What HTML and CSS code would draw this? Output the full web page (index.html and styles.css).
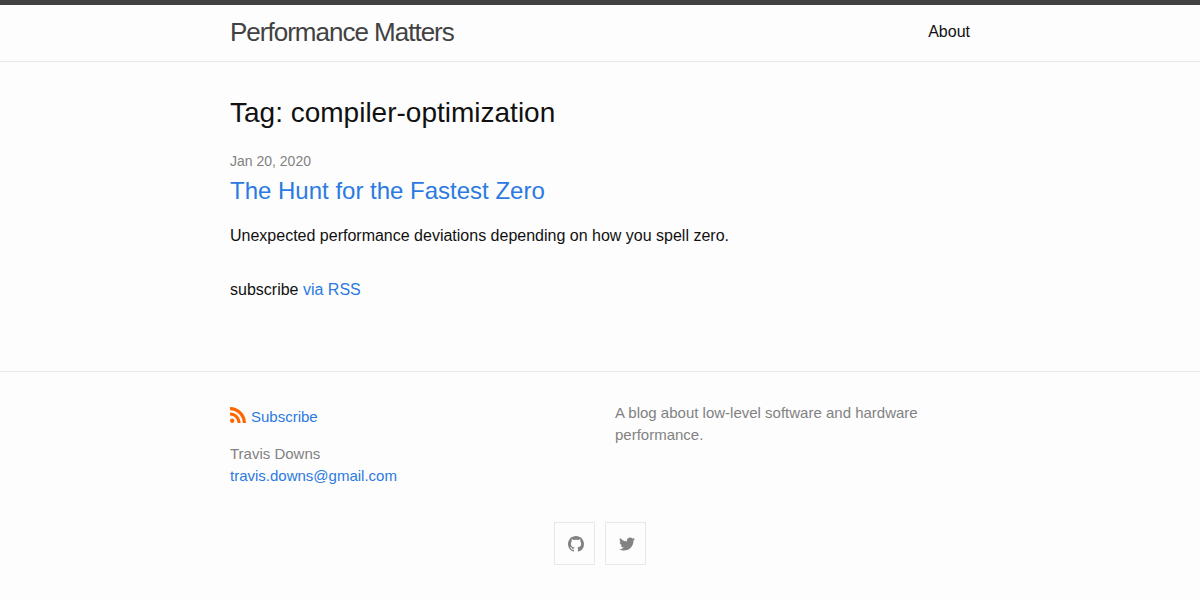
FILE: index.html
```html
<!DOCTYPE html>
<html lang="en">
<head>
<meta charset="utf-8">
<title>Tag: compiler-optimization | Performance Matters</title>
<link rel="stylesheet" href="styles.css">
</head>
<body>
<header class="site-header">
  <div class="wrapper header-row">
    <a class="site-title" href="#">Performance Matters</a>
    <nav class="site-nav"><a class="page-link" href="#">About</a></nav>
  </div>
</header>
<main class="page-content">
  <div class="wrapper">
    <h1 class="page-heading">Tag: compiler-optimization</h1>
    <ul class="post-list">
      <li>
        <span class="post-meta">Jan 20, 2020</span>
        <h3 class="post-title"><a class="post-link" href="#">The Hunt for the Fastest Zero</a></h3>
        <p class="excerpt">Unexpected performance deviations depending on how you spell zero.</p>
      </li>
    </ul>
    <p class="rss-subscribe">subscribe <a href="#">via RSS</a></p>
  </div>
</main>
<footer class="site-footer">
  <div class="wrapper">
    <div class="footer-cols">
      <div class="footer-col">
        <p class="feed"><a href="#"><svg class="feed-icon" viewBox="0 0 16 16"><path d="M12.8 16C12.8 8.978 7.022 3.2 0 3.2V0c8.777 0 16 7.223 16 16h-3.2zM2.194 11.61c1.21 0 2.195.985 2.195 2.196 0 1.21-.99 2.194-2.2 2.194C.98 16 0 15.017 0 13.806c0-1.21.983-2.195 2.194-2.195zM10.606 16h-3.11c0-4.113-3.383-7.497-7.496-7.497v-3.11c5.818 0 10.606 4.79 10.606 10.607z"/></svg><span>Subscribe</span></a></p>
        <ul class="contact-list"><li>Travis Downs</li><li><a href="#">travis.downs@gmail.com</a></li></ul>
      </div>
      <div class="footer-col"><p class="blurb">A blog about low-level software and hardware performance.</p></div>
    </div>
    <ul class="social-list">
      <li><a class="social-link" href="#" aria-label="GitHub"><svg class="social-icon" viewBox="0 0 16 16"><path d="M8 0C3.58 0 0 3.58 0 8c0 3.54 2.29 6.53 5.47 7.59.4.07.55-.17.55-.38 0-.19-.01-.82-.01-1.49-2.01.37-2.53-.49-2.69-.94-.09-.23-.48-.94-.82-1.13-.28-.15-.68-.52-.01-.53.63-.01 1.08.58 1.23.82.72 1.21 1.87.87 2.33.66.07-.52.28-.87.51-1.07-1.78-.2-3.64-.89-3.64-3.95 0-.87.31-1.59.82-2.15-.08-.2-.36-1.02.08-2.12 0 0 .67-.21 2.2.82.64-.18 1.32-.27 2-.27s1.36.09 2 .27c1.53-1.04 2.2-.82 2.2-.82.44 1.1.16 1.92.08 2.12.51.56.82 1.27.82 2.15 0 3.07-1.87 3.75-3.65 3.95.29.25.54.73.54 1.48 0 1.07-.01 1.93-.01 2.2 0 .21.15.46.55.38A8.01 8.01 0 0 0 16 8c0-4.42-3.58-8-8-8z"/></svg></a></li>
      <li><a class="social-link" href="#" aria-label="Twitter"><svg class="social-icon" viewBox="0 0 16 16"><path d="M16 3.038c-.59.26-1.22.437-1.885.517.677-.407 1.198-1.05 1.443-1.816-.634.37-1.337.64-2.085.79-.598-.64-1.45-1.04-2.396-1.04-1.812 0-3.282 1.47-3.282 3.28 0 .26.03.51.085.75-2.728-.13-5.147-1.44-6.766-3.42C.83 2.58.67 3.14.67 3.75c0 1.14.58 2.143 1.46 2.732-.538-.017-1.045-.165-1.487-.41v.04c0 1.59 1.13 2.918 2.633 3.22-.276.074-.566.114-.865.114-.21 0-.41-.02-.61-.058.42 1.304 1.63 2.253 3.07 2.28-1.12.88-2.54 1.404-4.07 1.404-.26 0-.52-.015-.78-.045 1.46.93 3.18 1.474 5.04 1.474 6.04 0 9.34-5 9.34-9.33 0-.14 0-.28-.01-.42.64-.46 1.2-1.04 1.64-1.7z"/></svg></a></li>
    </ul>
  </div>
</footer>
</body>
</html>
```
FILE: styles.css
```css
* { box-sizing: border-box; }
body, h1, h3, p, ul { margin: 0; padding: 0; font-weight: 400; }
body { font: 16px/24px "Liberation Sans", Arial, sans-serif; color: #111; background: #fdfdfd; }
ul { list-style: none; }
a { color: #2a7ae2; text-decoration: none; }
.wrapper { width: 740px; margin: 0 auto; }
.site-header { border-top: 5px solid #424242; border-bottom: 1px solid #e8e8e8; height: 62px; }
.header-row { display: flex; justify-content: space-between; line-height: 54px; }
.site-title { font-size: 26px; letter-spacing: -1px; color: #424242; }
.page-link { color: #111; }
.page-content { padding: 30px 0; height: 309px; }
.page-heading { font-size: 28px; line-height: 42px; margin-bottom: 15px; }
.post-meta { display: block; font-size: 14px; line-height: 24px; color: #828282; }
.post-title { font-size: 24px; line-height: 36px; margin-bottom: 15px; }
.rss-subscribe { margin-top: 30px; }
.site-footer { border-top: 1px solid #e8e8e8; padding: 30px 0; }
.footer-cols { display: grid; grid-template-columns: 355px 355px; gap: 30px; font-size: 15px; line-height: 22px; color: #828282; }
.feed { margin: 4px 0 15px; }
.feed a { display: flex; gap: 5px; }
.feed-icon { width: 16px; height: 16px; margin-top: 1px; fill: #f60; }
.social-list { display: flex; justify-content: center; gap: 10px; margin-top: 35px; }
.social-link { display: block; width: 41px; height: 43px; border: 1px solid #e8e8e8; padding: 13px 11px 12px 13px; }
.social-icon { display: block; width: 16px; height: 16px; fill: #828282; }
```
